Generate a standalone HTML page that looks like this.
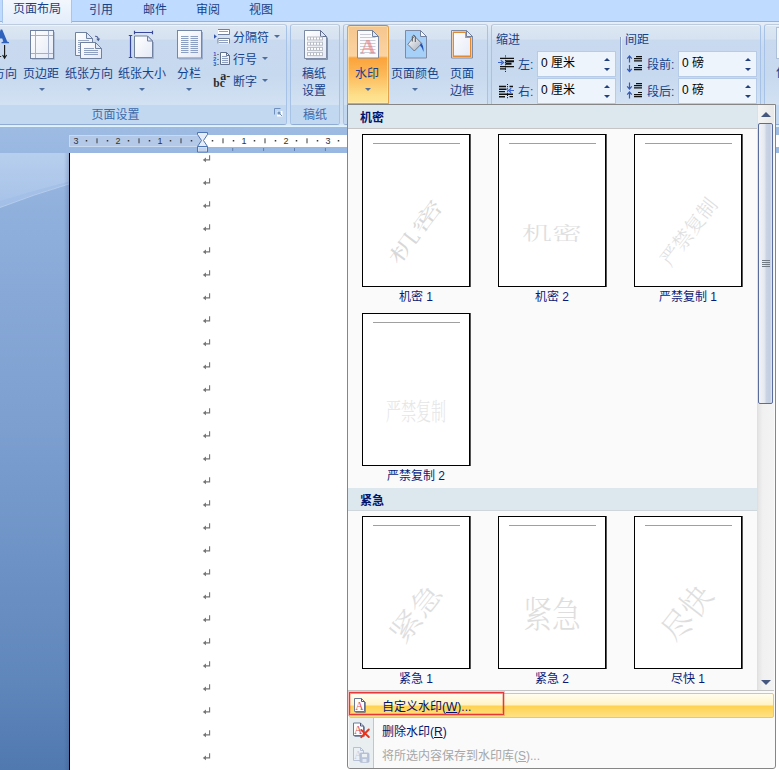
<!DOCTYPE html>
<html lang="zh-CN">
<head>
<meta charset="utf-8">
<title>水印</title>
<style>
html,body{margin:0;padding:0;}
body{width:779px;height:770px;overflow:hidden;position:relative;background:#bfdbff;
 font-family:"Liberation Sans","Noto Sans CJK SC",sans-serif;font-size:12px;color:#15428b;}
.abs{position:absolute;}
#app{position:absolute;left:0;top:0;width:779px;height:770px;overflow:hidden;}
/* tabs */
#tabs{position:absolute;left:0;top:0;width:779px;height:22px;background:#bfdbff;}
.tab{position:absolute;top:0;height:20px;line-height:18px;text-align:center;color:#15428b;font-size:12px;white-space:nowrap;}
#tab-active{left:2px;width:70px;top:-3px;height:26px;z-index:2;line-height:22px;background:linear-gradient(#f4f8fd,#e3edfb);border:1px solid #a9c6ea;border-bottom:none;border-radius:3px 3px 0 0;box-sizing:border-box;}
/* ribbon */
#ribbon{position:absolute;left:0;top:21px;width:779px;height:106px;background:linear-gradient(#e6eef8 0,#e2ebf6 3px,#d5e2f2 12px,#c8dbf0 26px,#c5d9ef 60px,#d3e2f4 102px,#d9eefb 103px,#e3f4fc 105px);border-top:1px solid #8fb3e4;box-sizing:border-box;}
.group{position:absolute;top:2px;height:101px;box-sizing:border-box;box-shadow:inset 0 1px 0 #eef3fa;border:1px solid #a6c2e6;border-top-color:#bccbe0;border-bottom-color:#8fabd3;border-radius:3px;background:linear-gradient(#dde7f3 0,#d6e2f1 14px,#c9daef 15px,#c7d9ef 50px,#d3e2f3 81px);overflow:hidden;}
.group .glabel{position:absolute;left:0;right:0;bottom:0;height:19px;line-height:20px;background:#c2d8f1;color:#3e6aaa;text-align:center;font-size:12px;}
.btxt{position:absolute;text-align:center;white-space:nowrap;color:#15428b;font-size:12px;line-height:17px;}
.arrow{position:absolute;width:0;height:0;border-left:3px solid transparent;border-right:3px solid transparent;border-top:3px solid #4e6e9e;}
/* doc */
#doc{position:absolute;left:0;top:127px;width:779px;height:643px;background:linear-gradient(#9dbbe3 0,#8eaedb 100px,#7c9fd0 300px,#5f86bb 560px,#5079b0 643px);}

/* dropdown */
#dd{position:absolute;left:347px;top:104px;width:429px;height:665px;box-sizing:border-box;border:1px solid #868686;background:#fafafa;border-radius:0 0 3px 3px;overflow:hidden;}
.dhead{position:absolute;left:0;width:409px;height:23px;background:#dde7ee;border-bottom:1px solid #c5c5c5;font-weight:bold;color:#00156e;font-size:12px;line-height:26px;padding-left:12px;box-sizing:content-box;overflow:hidden;}
.thumb{position:absolute;width:106px;height:151px;background:#fff;border:1px solid #000;box-shadow:1px 0 0 #555;box-sizing:content-box;overflow:hidden;}
.thumb .ln{position:absolute;left:10px;top:8px;width:87px;height:1px;background:#a0a0a0;}
.wm{position:absolute;white-space:nowrap;font-family:"Liberation Serif","Noto Serif CJK SC",serif;color:#dadada;line-height:1;font-weight:300;}
.tlabel{position:absolute;width:110px;text-align:center;font-size:12px;line-height:14px;color:#0a1a78;white-space:nowrap;}
.mi{position:absolute;left:1px;width:425px;height:24px;line-height:24px;font-size:12px;color:#00156e;}
.mi span.t{position:absolute;left:34px;top:0;white-space:nowrap;}
u{text-decoration:underline;}
.inp{box-sizing:border-box;background:#eef4fc;border:1px solid #b5cbe8;font-size:12px;}
</style>
</head>
<body>
<div id="app">
<div id="tabs">
  <div class="tab" id="tab-active">页面布局</div>
  <div class="tab" style="left:89px;top:1px;">引用</div>
  <div class="tab" style="left:143px;top:1px;">邮件</div>
  <div class="tab" style="left:196px;top:1px;">审阅</div>
  <div class="tab" style="left:249px;top:1px;">视图</div>
</div>
<div id="ribbon">
<!-- groups -->
<div class="group" style="left:-10px;width:297px;"><div class="glabel" style="padding-left:0;"><span style="position:absolute;left:100.5px;top:0;">页面设置</span></div>
  <svg class="abs" style="left:283px;top:83px" width="9" height="9" viewBox="0 0 9 9"><path d="M0.5 6.5V0.5H6.5" fill="none" stroke="#6f8fbd"/><path d="M3 3h5.5v5.5H3z" fill="#fff" stroke="none"/><path d="M3.5 3.5h3v3h-3z" fill="#6f8fbd"/><path d="M4 4l4 4" stroke="#6f8fbd"/></svg>
</div>
<div class="group" style="left:290px;width:50px;"><div class="glabel">稿纸</div></div>
<div class="group" style="left:343px;width:145px;"><div class="glabel"></div></div>
<div class="group" style="left:491px;width:270px;"><div class="glabel"></div></div>
<div class="group" style="left:764px;width:40px;"><div class="glabel"></div></div>
</div>
<div class="abs" style="left:347px;top:25px;width:42px;height:79px;box-sizing:border-box;border:1px solid #e0a34c;border-top-color:#a89068;border-radius:3px 3px 0 0;background:linear-gradient(#f6c58d 0,#fbd4a3 30px,#fba33a 32px,#fcb858 48px,#fde08c 70px,#fde596 78px);box-shadow:inset 0 0 0 1px rgba(255,236,190,.55);"></div>
<svg class="abs" id="ricons" style="left:0;top:0" width="779" height="128" viewBox="0 0 779 128">
<defs>
<linearGradient id="pg" x1="0" y1="0" x2="1" y2="1"><stop offset="0" stop-color="#ffffff"/><stop offset="1" stop-color="#e4e9f6"/></linearGradient>
<linearGradient id="bk" x1="0" y1="0" x2="1" y2="1"><stop offset="0" stop-color="#ffffff"/><stop offset="1" stop-color="#a4acba"/></linearGradient>
</defs>
<!-- text direction (partial) -->
<path d="M-3 43.2L0.6 29.5H2.2L7.2 41.6L9 42.2V43.2H1.5V42.2L3.3 41.6L2.2 38.6H-2" fill="#2f62bd"/>
<path d="M4.6 45V57" stroke="#111" stroke-width="1.1" fill="none"/><path d="M2.6 55L4.6 58.2L6.6 55" stroke="#111" stroke-width="1.1" fill="none"/>
<path d="M0 56.5H1.2" stroke="#333" stroke-width="1"/>
<!-- margins -->
<rect x="30.5" y="30.5" width="23" height="28" fill="url(#pg)" stroke="#6f819f"/>
<path d="M35.5 31V58M48.5 31V58M31 35.5H53M31 53.5H53" stroke="#a3b0c8" fill="none"/>
<path d="M54.5 32V59.5H32" stroke="#9fb2cf" fill="none" opacity=".7"/>
<!-- orientation -->
<path d="M75.5 32.5H86.5L92.5 38.5V55.5H75.5Z" fill="url(#pg)" stroke="#6f819f"/>
<path d="M86.5 32.5V38.5H92.5Z" fill="#dfe8f8" stroke="#6f819f" stroke-linejoin="round"/>
<path d="M78 40.5H89M78 42.5H82M78 44.5H82M78 46.5H82M78 48.5H82M78 50.5H82M78 52.5H82" stroke="#9aa9c6" fill="none"/>
<path d="M80.500 42.500H95.500L101.500 48.500V58.500H80.500Z" fill="url(#pg)" stroke="#6f819f"/>
<path d="M95.5 42.5V48.5H101.500Z" fill="#dfe8f8" stroke="#6f819f" stroke-linejoin="round"/>
<path d="M84 48.500H94M84 50.500H98M84 52.500H98M84 54.500H98" stroke="#8f9fc0" fill="none"/>
<path d="M95 36.3Q98 36 98.300 39.500" stroke="#4a5f90" fill="none" stroke-width="1.100"/><path d="M96.300 38.800L98.400 41.300L100.200 38.600Z" fill="#4a5f90"/>
<!-- size -->
<path d="M130.500 35.500V57.500M128.800 35.500H132.200M128.800 57.500H132.200M134.500 32.500H152.500M134.500 30.800V34.200M152.500 30.800V34.200" stroke="#36479c" stroke-width="1.200" fill="none"/>
<path d="M134.500 36H147.500L152.500 41V57.500H134.500Z" fill="url(#pg)" stroke="#6f819f"/>
<path d="M147.500 36V41H152.500Z" fill="#dfe8f8" stroke="#6f819f" stroke-linejoin="round"/>
<path d="M153.500 42V58.500H136" stroke="#8fa3c4" fill="none" opacity=".7"/>
<!-- columns -->
<rect x="177.500" y="30.500" width="24" height="27.500" fill="url(#pg)" stroke="#7587a6"/>
<path d="M202.500 32V59H179" stroke="#8fa3c4" fill="none" opacity=".8"/>
<path d="M181 36.500H188.500M181 38.500H188.500M181 40.500H188.500M181 42.500H188.500M181 44.500H188.500M181 46.500H188.500M181 48.500H188.500M181 50.500H188.500M181 52.500H188.500M190.500 36.500H198M190.500 38.500H198M190.500 40.500H198M190.500 42.500H198M190.500 44.500H198M190.500 46.500H198M190.500 48.500H198M190.500 50.500H198M190.500 52.500H198" stroke="#8c9fc2" fill="none"/>
<!-- breaks -->
<path d="M214 34.200L216.800 36.500L214 38.800Z" fill="#2f55b5"/>
<path d="M218 29.500H229.500V34.500H218" fill="#fff" stroke="#6f819f"/><path d="M219 31.500H228" stroke="#8f9fc0"/>
<path d="M218 43.500V38.500H229.500V43.500" fill="#fff" stroke="#6f819f"/><path d="M219 40.500H228M219 42.500H228" stroke="#8f9fc0"/>
<!-- line numbers -->
<path d="M220.500 52.500H226.500L229.500 55.500V64.500H220.500Z" fill="url(#pg)" stroke="#5f6f8c"/><path d="M226.500 52.500V55.500H229.500" fill="none" stroke="#5f6f8c"/>
<path d="M222 56.500H227M222 58.500H228M222 60.500H228M222 62.500H228" stroke="#8f9fc0"/>
<text x="213.300" y="56.300" font-family="Liberation Sans, sans-serif" font-size="5.500" font-weight="bold" fill="#2f4fc0">1</text>
<text x="213.300" y="61.300" font-family="Liberation Sans, sans-serif" font-size="5.500" font-weight="bold" fill="#2f4fc0">2</text>
<text x="213.300" y="66.300" font-family="Liberation Sans, sans-serif" font-size="5.500" font-weight="bold" fill="#2f4fc0">3</text>
<rect x="217.500" y="54" width="1" height="1" fill="#333"/><rect x="217.500" y="59" width="1" height="1" fill="#333"/><rect x="217.500" y="64" width="1" height="1" fill="#333"/>
<!-- hyphenation -->
<text x="213.300" y="86.600" font-family="Liberation Serif, serif" font-size="11.5" font-weight="bold" fill="#2b2b2b">bc</text>
<text x="220.300" y="79.800" font-family="Liberation Serif, serif" font-size="12" font-weight="bold" fill="#2b2b2b">a-</text>
<!-- genko -->
<path d="M304.500 30.500H320.500L326.500 36.500V58.500H304.500Z" fill="url(#pg)" stroke="#7d8aa3"/>
<path d="M320.500 30.500V36.500H326.500Z" fill="#dfe8f8" stroke="#5f6f8c" stroke-linejoin="round"/>
<path d="M327.500 37.500V59.500H306" stroke="#5a78c8" fill="none" opacity=".75"/>
<g fill="#b9bdc6"><rect x="307" y="36.500" width="16" height="4"/><rect x="307" y="41.700" width="16" height="4"/><rect x="307" y="46.900" width="16" height="4"/><rect x="307" y="52.100" width="16" height="4"/></g>
<g fill="#fff"><rect x="308" y="37.500" width="2" height="2"/><rect x="311" y="37.500" width="2" height="2"/><rect x="314" y="37.500" width="2" height="2"/><rect x="317" y="37.500" width="2" height="2"/><rect x="320" y="37.500" width="2" height="2"/>
<rect x="308" y="42.700" width="2" height="2"/><rect x="311" y="42.700" width="2" height="2"/><rect x="314" y="42.700" width="2" height="2"/><rect x="317" y="42.700" width="2" height="2"/><rect x="320" y="42.700" width="2" height="2"/>
<rect x="308" y="47.900" width="2" height="2"/><rect x="311" y="47.900" width="2" height="2"/><rect x="314" y="47.900" width="2" height="2"/><rect x="317" y="47.900" width="2" height="2"/><rect x="320" y="47.900" width="2" height="2"/>
<rect x="308" y="53.100" width="2" height="2"/><rect x="311" y="53.100" width="2" height="2"/><rect x="314" y="53.100" width="2" height="2"/><rect x="317" y="53.100" width="2" height="2"/><rect x="320" y="53.100" width="2" height="2"/></g>

<!-- watermark icon -->
<path d="M357.500 30.500H372.500L378.500 36.500V58H357.500Z" fill="#fbfbfd" stroke="#7d8aa3"/>
<path d="M372.500 30.500V36.500H378.500Z" fill="#dfe8f8" stroke="#6f7f9c" stroke-linejoin="round"/>
<path d="M360 34.500H371M360 37.500H375.500M360 40.500H375.500M360 43.500H375.500M360 46.500H375.500M360 49.500H375.500M360 52.500H375.500" stroke="#c9ccd6" fill="none"/>
<text x="368" y="53.500" text-anchor="middle" font-family="Liberation Serif, serif" font-size="22" font-weight="bold" fill="#e06c6c" opacity=".52">A</text>
<!-- page color -->
<path d="M405.500 30.500H420.500L426.500 36.500V58H405.500Z" fill="#a7d0f8" stroke="#7d8aa3"/>
<path d="M420.500 30.500V36.500H426.500Z" fill="#f4f8fe" stroke="#6f7f9c" stroke-linejoin="round"/>
<path d="M414.500 36.200L421.800 43.500L414.300 51L407.800 44.300Z" fill="url(#bk)" stroke="#5c6474" stroke-width=".8"/>
<path d="M412.300 41.500V36.500Q413.800 33.800 415.300 36.500V42" fill="none" stroke="#555" stroke-width="1"/>
<path d="M420.800 43Q423.800 44.500 423.500 52Q422.300 47.500 420 45.600Z" fill="#2450b8"/>
<!-- page border -->
<path d="M451.500 30.500H466.500L472.500 36.500V58H451.500Z" fill="url(#pg)" stroke="#7d8aa3"/>
<path d="M453.300 32.300H465.800V37.300H470.700V56.200H453.300Z" fill="none" stroke="#e08a36" stroke-width="1.400"/>
<path d="M466.500 30.500V36.500H472.500Z" fill="#e8eefb" stroke="#6f7f9c" stroke-linejoin="round"/>
<!-- indent left -->
<g stroke="#111" fill="none">
<path d="M500 58.300H514M500 66.600H514M500 68.900H506" stroke-width="1.300"/><path d="M505.500 61.200H514M505.500 63.800H511.500" stroke-width="2"/>
<path d="M505.500 55.500V72" stroke-dasharray="1 1.200" stroke-width="1"/>
</g>
<path d="M498 62.500H502M500.800 60.300L503.500 62.500L500.800 64.700" stroke="#3a62c8" stroke-width="1.200" fill="none"/>
<!-- indent right -->
<g stroke="#111" fill="none">
<path d="M499 86.500H506M499 89.200H506.500M499 91.600H505M499 94.300H513M499 96.700H505" stroke-width="1.400"/>
<path d="M509.500 86.500H513M509.500 96.700H513" stroke-width="1.300"/>
<path d="M507.500 84V99" stroke-dasharray="1 1.200" stroke-width="1"/>
</g>
<path d="M514 90.500H510M511.200 88.300L508.500 90.500L511.200 92.700" stroke="#3a62c8" stroke-width="1.200" fill="none"/>
<!-- separator -->
<path d="M620.500 37V92" stroke="#8aa2cb"/><path d="M621.500 37V92" stroke="#eef4fc" opacity=".8"/>
<!-- spacing before -->
<g stroke="#111" stroke-width="1.200" fill="none"><path d="M636 56.600H642M634 58.700H642M634 60.800H642M638 65.500H642M634 67.600H642M634 69.700H642"/></g>
<g stroke="#3458b8" stroke-width="1.200" fill="none"><path d="M629.500 56V62.500M627.200 58.600L629.500 56L631.800 58.600M629.500 65V71.500M627.200 68.900L629.500 71.500L631.800 68.900"/></g>
<!-- spacing after -->
<g stroke="#111" stroke-width="1.200" fill="none"><path d="M636 83.600H642M634 85.700H642M634 87.800H642M638 92.500H642M634 94.600H642M634 96.700H642"/></g>
<g stroke="#3458b8" stroke-width="1.200" fill="none"><path d="M629.500 82.500V89M627.200 86.400L629.500 89L631.800 86.400M629.500 92V98.500M627.200 94.600L629.500 92L631.800 94.600"/></g>
</svg>
<div id="rtext">
<div class="btxt" style="left:-31px;top:66.0px;">文字方向</div>
<div class="btxt" style="left:23px;top:66.0px;">页边距</div>
<div class="arrow" style="left:38.5px;top:88px;"></div>
<div class="btxt" style="left:65px;top:66.0px;">纸张方向</div>
<div class="arrow" style="left:86px;top:88px;"></div>
<div class="btxt" style="left:118px;top:66.0px;">纸张大小</div>
<div class="arrow" style="left:138.5px;top:88px;"></div>
<div class="btxt" style="left:177px;top:66.0px;">分栏</div>
<div class="arrow" style="left:186px;top:88px;"></div>
<div class="btxt" style="left:233px;top:30.0px;">分隔符</div>
<div class="arrow" style="left:273.5px;top:35px;"></div>
<div class="btxt" style="left:233px;top:52.0px;">行号</div>
<div class="arrow" style="left:262px;top:57px;"></div>
<div class="btxt" style="left:233px;top:74.0px;">断字</div>
<div class="arrow" style="left:262px;top:79px;"></div>
<div class="btxt" style="left:302px;top:66.0px;">稿纸</div>
<div class="btxt" style="left:302px;top:83.0px;">设置</div>
<div class="btxt" style="left:355px;top:66.0px;">水印</div>
<div class="arrow" style="left:364.5px;top:88px;"></div>
<div class="btxt" style="left:391px;top:66.0px;">页面颜色</div>
<div class="arrow" style="left:412px;top:88px;"></div>
<div class="btxt" style="left:450px;top:66.0px;">页面</div>
<div class="btxt" style="left:450px;top:83.0px;">边框</div>
<div class="btxt" style="left:496px;top:32.0px;">缩进</div>
<div class="btxt" style="left:625px;top:32.0px;">间距</div>
<div class="btxt" style="left:518px;top:57.0px;">左:</div>
<div class="btxt" style="left:518px;top:84.0px;">右:</div>
<div class="btxt" style="left:647px;top:57.0px;">段前:</div>
<div class="btxt" style="left:647px;top:84.0px;">段后:</div>
<div class="abs inp" style="left:537px;top:51px;width:79px;height:26px;"><span class="abs" style="left:3px;top:1px;color:#000;white-space:nowrap;">0 厘米</span><div class="abs" style="left:66px;top:6px;width:0;height:0;border-left:3px solid transparent;border-right:3px solid transparent;border-bottom:3px solid #23407e;"></div><div class="abs" style="left:66px;top:16px;width:0;height:0;border-left:3px solid transparent;border-right:3px solid transparent;border-top:3px solid #23407e;"></div></div>
<div class="abs inp" style="left:537px;top:78px;width:79px;height:26px;"><span class="abs" style="left:3px;top:1px;color:#000;white-space:nowrap;">0 厘米</span><div class="abs" style="left:66px;top:6px;width:0;height:0;border-left:3px solid transparent;border-right:3px solid transparent;border-bottom:3px solid #23407e;"></div><div class="abs" style="left:66px;top:16px;width:0;height:0;border-left:3px solid transparent;border-right:3px solid transparent;border-top:3px solid #23407e;"></div></div>
<div class="abs inp" style="left:678px;top:51px;width:79px;height:26px;"><span class="abs" style="left:3px;top:1px;color:#000;white-space:nowrap;">0 磅</span><div class="abs" style="left:66px;top:6px;width:0;height:0;border-left:3px solid transparent;border-right:3px solid transparent;border-bottom:3px solid #23407e;"></div><div class="abs" style="left:66px;top:16px;width:0;height:0;border-left:3px solid transparent;border-right:3px solid transparent;border-top:3px solid #23407e;"></div></div>
<div class="abs inp" style="left:678px;top:78px;width:79px;height:26px;"><span class="abs" style="left:3px;top:1px;color:#000;white-space:nowrap;">0 磅</span><div class="abs" style="left:66px;top:6px;width:0;height:0;border-left:3px solid transparent;border-right:3px solid transparent;border-bottom:3px solid #23407e;"></div><div class="abs" style="left:66px;top:16px;width:0;height:0;border-left:3px solid transparent;border-right:3px solid transparent;border-top:3px solid #23407e;"></div></div>
<div class="abs" style="left:776px;top:27px;width:10px;height:30px;background:#f4f7fc;border:1px solid #aebfd8;"></div>
<div class="btxt" style="left:776px;top:65px;">位置</div>
</div>
<div id="doc">
 <svg class="abs" style="left:0;top:26px" width="69" height="140" viewBox="0 0 69 140"><defs><linearGradient id="wg" x1="0" y1="0" x2="0" y2="1"><stop offset="0" stop-color="#bcd3f0"/><stop offset="1" stop-color="#a9c4e9"/></linearGradient></defs><path d="M0 0H69V31Q33 41.800 0 54.500Z" fill="#a9c4ea" opacity=".75"/><path d="M69 31Q33 41.800 0 54.500" fill="none" stroke="#bfd4f1" stroke-width="1" opacity=".7"/><path d="M0 0H69V28.500Q34 37.300 0 48Z" fill="url(#wg)" opacity=".8"/></svg>
 <!-- ruler -->
 <div class="abs" style="left:69px;top:7.5px;width:133px;height:12px;background:#b4c9e8;border:1px solid #c9daf1;box-sizing:border-box;"></div>
 <div class="abs" style="left:202px;top:7.5px;width:577px;height:12px;background:#fff;"></div>
 <svg class="abs" style="left:69px;top:5px" width="290" height="22" viewBox="69 132 290 22" font-family="Liberation Sans, sans-serif" font-size="9" fill="#333" text-anchor="middle">
<text x="76" y="144">3</text><text x="118" y="144">2</text><text x="160" y="144">1</text><text x="244" y="144">1</text><text x="286" y="144">2</text><text x="328" y="144">3</text><rect x="85.75" y="140" width="1.5" height="1.5" fill="#3a3a3a"/><rect x="96.50" y="138.3" width="1" height="5" fill="#3a3a3a"/><rect x="106.75" y="140" width="1.5" height="1.5" fill="#3a3a3a"/><rect x="127.75" y="140" width="1.5" height="1.5" fill="#3a3a3a"/><rect x="138.50" y="138.3" width="1" height="5" fill="#3a3a3a"/><rect x="148.75" y="140" width="1.5" height="1.5" fill="#3a3a3a"/><rect x="169.75" y="140" width="1.5" height="1.5" fill="#3a3a3a"/><rect x="180.50" y="138.3" width="1" height="5" fill="#3a3a3a"/><rect x="190.75" y="140" width="1.5" height="1.5" fill="#3a3a3a"/><rect x="211.75" y="140" width="1.5" height="1.5" fill="#3a3a3a"/><rect x="222.50" y="138.3" width="1" height="5" fill="#3a3a3a"/><rect x="232.75" y="140" width="1.5" height="1.5" fill="#3a3a3a"/><rect x="253.75" y="140" width="1.5" height="1.5" fill="#3a3a3a"/><rect x="264.50" y="138.3" width="1" height="5" fill="#3a3a3a"/><rect x="274.75" y="140" width="1.5" height="1.5" fill="#3a3a3a"/><rect x="295.75" y="140" width="1.5" height="1.5" fill="#3a3a3a"/><rect x="306.50" y="138.3" width="1" height="5" fill="#3a3a3a"/><rect x="316.75" y="140" width="1.5" height="1.5" fill="#3a3a3a"/><rect x="337.75" y="140" width="1.5" height="1.5" fill="#3a3a3a"/><rect x="232.2" y="148" width="1" height="3" fill="#5f7fae"/><rect x="263.1" y="148" width="1" height="3" fill="#5f7fae"/><rect x="294.0" y="148" width="1" height="3" fill="#5f7fae"/><rect x="324.9" y="148" width="1" height="3" fill="#5f7fae"/><path d="M197.5 132.5H207.5V134.5L203.5 140.5L207.5 146.5V152H197.5V146.5L201.5 140.5L197.5 134.5Z" fill="#e6edf7" stroke="#4f74b3" stroke-width="1"/><path d="M197.5 146.5H207.5" stroke="#4f74b3"/><path d="M198.500 147.500H206.500V151H198.500Z" fill="#c3d3ec"/></svg>
 <!-- page -->
 <div class="abs" style="left:64px;top:26px;width:5px;height:620px;background:linear-gradient(90deg,rgba(40,60,110,0),rgba(40,60,110,.22));"></div>
 <div class="abs" style="left:69px;top:26px;width:720px;height:620px;background:#fff;border-left:1px solid #000;"></div>
 <svg class="abs" style="left:200px;top:25px" width="14" height="618" viewBox="200 152 14 618" fill="none" stroke="#767676" stroke-width="1.1">
<path d="M209.6 155.3V159.9H204.8"/><path d="M202.8 159.9L206 157.5V162.3Z" fill="#767676" stroke="none"/><path d="M209.6 178.3V182.9H204.8"/><path d="M202.8 182.9L206 180.5V185.3Z" fill="#767676" stroke="none"/><path d="M209.6 201.3V205.9H204.8"/><path d="M202.8 205.9L206 203.5V208.3Z" fill="#767676" stroke="none"/><path d="M209.6 224.3V228.9H204.8"/><path d="M202.8 228.9L206 226.5V231.3Z" fill="#767676" stroke="none"/><path d="M209.6 247.3V251.9H204.8"/><path d="M202.8 251.9L206 249.5V254.3Z" fill="#767676" stroke="none"/><path d="M209.6 270.3V274.9H204.8"/><path d="M202.8 274.9L206 272.5V277.3Z" fill="#767676" stroke="none"/><path d="M209.6 293.3V297.9H204.8"/><path d="M202.8 297.9L206 295.5V300.3Z" fill="#767676" stroke="none"/><path d="M209.6 316.3V320.9H204.8"/><path d="M202.8 320.9L206 318.5V323.3Z" fill="#767676" stroke="none"/><path d="M209.6 339.3V343.9H204.8"/><path d="M202.8 343.9L206 341.5V346.3Z" fill="#767676" stroke="none"/><path d="M209.6 362.3V366.9H204.8"/><path d="M202.8 366.9L206 364.5V369.3Z" fill="#767676" stroke="none"/><path d="M209.6 385.3V389.9H204.8"/><path d="M202.8 389.9L206 387.5V392.3Z" fill="#767676" stroke="none"/><path d="M209.6 408.3V412.9H204.8"/><path d="M202.8 412.9L206 410.5V415.3Z" fill="#767676" stroke="none"/><path d="M209.6 431.3V435.9H204.8"/><path d="M202.8 435.9L206 433.5V438.3Z" fill="#767676" stroke="none"/><path d="M209.6 454.3V458.9H204.8"/><path d="M202.8 458.9L206 456.5V461.3Z" fill="#767676" stroke="none"/><path d="M209.6 477.3V481.9H204.8"/><path d="M202.8 481.9L206 479.5V484.3Z" fill="#767676" stroke="none"/><path d="M209.6 500.3V504.9H204.8"/><path d="M202.8 504.9L206 502.5V507.3Z" fill="#767676" stroke="none"/><path d="M209.6 523.3V527.9H204.8"/><path d="M202.8 527.9L206 525.5V530.3Z" fill="#767676" stroke="none"/><path d="M209.6 546.3V550.9H204.8"/><path d="M202.8 550.9L206 548.5V553.3Z" fill="#767676" stroke="none"/><path d="M209.6 569.3V573.9H204.8"/><path d="M202.8 573.9L206 571.5V576.3Z" fill="#767676" stroke="none"/><path d="M209.6 592.3V596.9H204.8"/><path d="M202.8 596.9L206 594.5V599.3Z" fill="#767676" stroke="none"/><path d="M209.6 615.3V619.9H204.8"/><path d="M202.8 619.9L206 617.5V622.3Z" fill="#767676" stroke="none"/><path d="M209.6 638.3V642.9H204.8"/><path d="M202.8 642.9L206 640.5V645.3Z" fill="#767676" stroke="none"/><path d="M209.6 661.3V665.9H204.8"/><path d="M202.8 665.9L206 663.5V668.3Z" fill="#767676" stroke="none"/><path d="M209.6 684.3V688.9H204.8"/><path d="M202.8 688.9L206 686.5V691.3Z" fill="#767676" stroke="none"/><path d="M209.6 707.3V711.9H204.8"/><path d="M202.8 711.9L206 709.5V714.3Z" fill="#767676" stroke="none"/><path d="M209.6 730.3V734.9H204.8"/><path d="M202.8 734.9L206 732.5V737.3Z" fill="#767676" stroke="none"/><path d="M209.6 753.3V757.9H204.8"/><path d="M202.8 757.9L206 755.5V760.3Z" fill="#767676" stroke="none"/></svg>
</div>
<div id="dd">
<div class="dhead" style="top:0;">机密</div>
<div class="thumb" style="left:14px;top:29px;"><div class="ln"></div><div class="wm" style="left:53px;top:97px;font-size:19px;color:#d8d8d8;transform:translate(-50%,-50%) rotate(-53deg) scale(2.0,1);">机密</div></div>
<div class="tlabel" style="left:13px;top:185px;">机密 1</div>
<div class="thumb" style="left:150px;top:29px;"><div class="ln"></div><div class="wm" style="left:53px;top:97.5px;font-size:18px;color:#dedede;transform:translate(-50%,-50%) translate(0,1px) rotate(0deg) scale(1.66,1);">机密</div></div>
<div class="tlabel" style="left:149px;top:185px;">机密 2</div>
<div class="thumb" style="left:286px;top:29px;"><div class="ln"></div><div class="wm" style="left:54px;top:97px;font-size:20px;color:#dedede;transform:translate(-50%,-50%) rotate(-52.5deg) scale(0.99,1);">严禁复制</div></div>
<div class="tlabel" style="left:285px;top:185px;">严禁复制 1</div>
<div class="thumb" style="left:14px;top:208px;"><div class="ln"></div><div class="wm" style="left:53.39999999999998px;top:98px;font-size:24px;color:#e6e6e6;transform:translate(-50%,-50%) rotate(0deg) scale(0.63,1);">严禁复制</div></div>
<div class="tlabel" style="left:13px;top:364px;">严禁复制 2</div>
<div class="dhead" style="top:383px;height:22px;line-height:26px;border-bottom:1px solid #cfd7dd;">紧急</div>
<div class="thumb" style="left:14px;top:411px;"><div class="ln"></div><div class="wm" style="left:53.69999999999999px;top:97px;font-size:28px;color:#dedede;transform:translate(-50%,-50%) rotate(-52deg) scale(1.16,1);">紧急</div></div>
<div class="tlabel" style="left:13px;top:567px;">紧急 1</div>
<div class="thumb" style="left:150px;top:411px;"><div class="ln"></div><div class="wm" style="left:52.700000000000045px;top:97.5px;font-size:36px;color:#dedede;transform:translate(-50%,-50%) translate(0,1px) rotate(0deg) scale(0.8,1);">紧急</div></div>
<div class="tlabel" style="left:149px;top:567px;">紧急 2</div>
<div class="thumb" style="left:286px;top:411px;"><div class="ln"></div><div class="wm" style="left:53px;top:97px;font-size:33px;color:#dedede;transform:translate(-50%,-50%) rotate(-52deg) scale(0.93,1);">尽快</div></div>
<div class="tlabel" style="left:285px;top:567px;">尽快 1</div>
<div class="abs" id="sb" style="left:409px;top:0;width:17px;height:585px;background:linear-gradient(90deg,#e4e4e4,#f1f1f1 30%,#f3f3f3);border-left:1px solid #e0e0e0;box-sizing:border-box;">
 <div class="abs" style="left:0;top:0;width:16px;height:18px;background:linear-gradient(90deg,#f4f4f4,#e8e8e8);"></div>
 <div class="abs" style="left:2.5px;top:7px;width:0;height:0;border-left:5px solid transparent;border-right:5px solid transparent;border-bottom:5px solid #46577f;"></div>
 <div class="abs" style="left:0px;top:18px;width:15px;height:281px;box-sizing:border-box;border:1px solid #5a6c9c;border-radius:2px;background:linear-gradient(90deg,#f0f2f6 0,#e6eaf1 40%,#c9d3e4 58%,#c3cee1 85%,#e3e9f3 100%);"></div>
 <div class="abs" style="left:3.5px;top:155px;width:8px;height:7px;background:repeating-linear-gradient(#727a86 0,#727a86 1px,transparent 1px,transparent 2px);"></div>
 <div class="abs" style="left:2.5px;top:575px;width:0;height:0;border-left:5px solid transparent;border-right:5px solid transparent;border-top:5px solid #46577f;"></div>
</div>
<div class="abs" style="left:0;top:585px;width:426px;height:1px;background:#c5c5c5;"></div>
<div class="abs" style="left:1px;top:588px;width:24px;height:75px;background:#e9eef1;border-right:1px solid #c5c5c5;"></div>
<div class="mi" id="mi1" style="top:588px;height:25px;box-sizing:border-box;border:1px solid #f0c85a;border-radius:2px;background:linear-gradient(#fffdf0 0,#fff3c4 48%,#ffd24f 52%,#ffe287 100%);"><span class="t" style="top:1px;left:32px;">自定义水印(<u>W</u>)...</span></div>
<svg class="abs" style="left:0;top:585px" width="30" height="80" viewBox="348 690 30 80">
<path d="M354.500 698.500H361.500L364.500 701.500V711.500H354.500Z" fill="#fdfdff" stroke="#6a7897"/>
<path d="M361.500 698.500V701.500H364.500" fill="none" stroke="#4a5878"/>
<path d="M365.300 702V712.300H355.500" fill="none" stroke="#3b4a70" opacity=".7"/>
<text x="359.400" y="709.800" text-anchor="middle" font-family="Liberation Serif, serif" font-size="11.500" fill="#d94a4a">A</text>
<path d="M353.500 723H360.500L363.500 726V735.500H353.500Z" fill="#fdfdff" stroke="#6a7897"/>
<path d="M360.500 723V726H363.500" fill="none" stroke="#4a5878"/>
<path d="M364.300 726.500V736.300H354.500" fill="none" stroke="#3b4a70" opacity=".7"/>
<text x="358.200" y="733.800" text-anchor="middle" font-family="Liberation Serif, serif" font-size="11.500" fill="#d94a4a">A</text>
<path d="M361.300 730L368.800 737M368.800 729.500L364.800 733.500L361.300 737.200" stroke="#e8341c" stroke-width="1.900" fill="none" stroke-linecap="round"/>
<g opacity=".55">
<path d="M353.500 747.500H360.500L363.500 750.500V760.500H353.500Z" fill="#eef2fa" stroke="#8d9cc0"/>
<path d="M360.500 747.500V750.500H363.500" fill="none" stroke="#8d9cc0"/>
<text x="358.200" y="758.800" text-anchor="middle" font-family="Liberation Serif, serif" font-size="11.500" fill="#a9b3cf">A</text>
<rect x="360" y="753" width="9" height="9.300" rx="1" fill="#93a3c8" stroke="#7e8fb8" stroke-width=".8"/>
<rect x="362" y="754" width="5" height="3.200" fill="#eef2fa"/><rect x="362.500" y="759" width="4" height="3" fill="#dfe6f4"/>
</g>
</svg>
<div class="mi" style="top:613px;"><span class="t" style="top:2px;left:33px;">删除水印(<u>R</u>)</span></div>
<div class="mi" style="top:638px;color:#a7a7a7;"><span class="t" style="top:1px;left:33px;">将所选内容保存到水印库(<u>S</u>)...</span></div>
<div class="abs" style="left:1px;top:587px;width:155px;height:23px;box-sizing:border-box;border:1px solid #e8373b;box-shadow:0 0 0 1px rgba(232,55,59,.28), inset 0 0 0 1px rgba(232,55,59,.28);"></div>
</div>
</div>
</body>
</html>
